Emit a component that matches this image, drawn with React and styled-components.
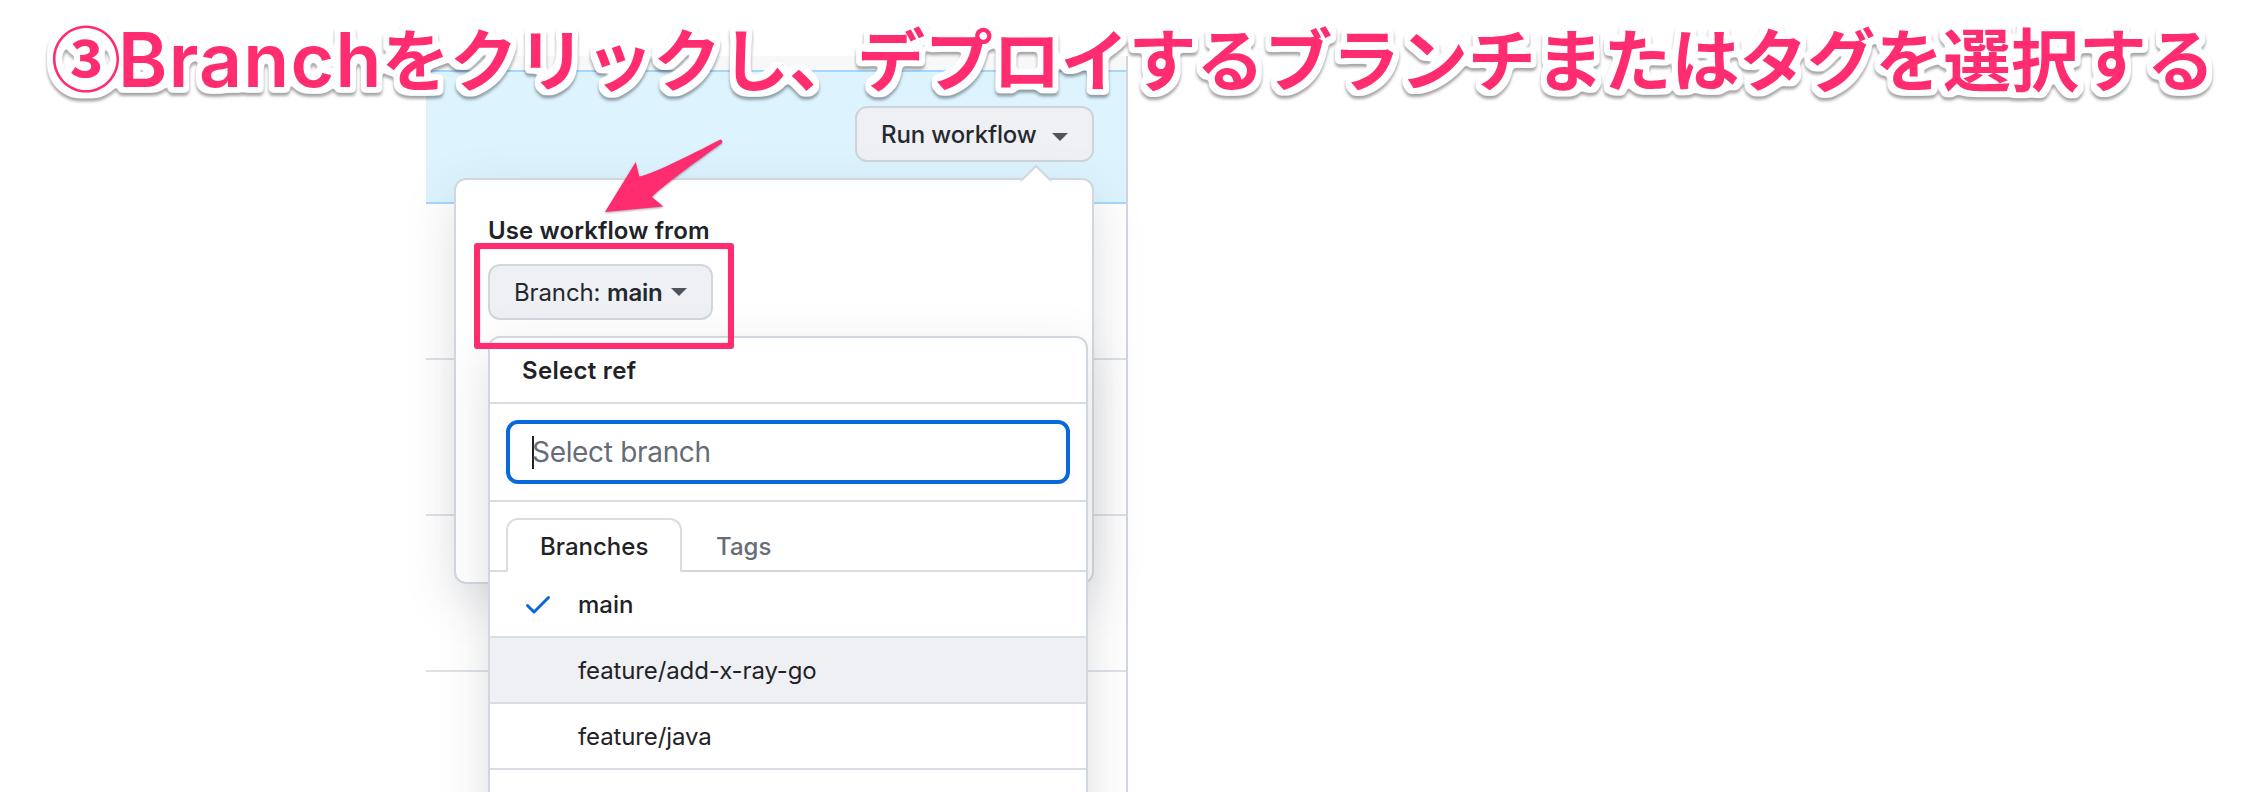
import React from "react";
import styled, { createGlobalStyle } from "styled-components";

const PINK = "#ff2d6f";

const GlobalStyle = createGlobalStyle`
  *, *::before, *::after { box-sizing: border-box; }
  body {
    margin: 0;
    background: #fff;
    color: #1f2328;
    font: 400 24px/36px Inter, "Liberation Sans", sans-serif;
  }
`;

const Page = styled.main`
  position: relative;
  height: 792px;
  padding: 56px 0 0 426px;
  overflow: hidden;
`;

const RunList = styled.section`
  width: 702px;
  border-right: 2px solid #d0d7de;
`;

const ListHeader = styled.header`
  height: 14px;
  background: #f6f8fa;
`;

const DispatchBanner = styled.div`
  display: flex;
  justify-content: flex-end;
  height: 134px;
  padding: 34px 32px 0 0;
  background: #ddf4ff;
  border: solid #a5d6ff;
  border-width: 2px 0;
`;

const RunRow = styled.div`
  height: 156px;
  border-bottom: 2px solid #dce1e6;
`;

const Anchor = styled.div`
  position: relative;
  width: ${(p) => p.$width}px;
  height: 56px;
`;

const Button = styled.button`
  display: flex;
  align-items: center;
  justify-content: space-between;
  width: 100%;
  height: 56px;
  padding: 2px 24px 0;
  border: 2px solid ${(p) => p.$border || "#d0d7de"};
  border-radius: 12px;
  background: #eff0f4;
  color: #24292f;
  font: inherit;
  font-weight: ${(p) => p.$weight || 400};
  letter-spacing: -0.12px;
  white-space: pre;

  b { font-weight: 600; letter-spacing: -0.2px; }
`;

const Caret = styled.span`
  margin-top: ${(p) => p.$drop || 0}px;
  border: solid transparent;
  border-width: 8px 8px 0;
  border-top-color: #4f535a;
`;

const Popover = styled.div`
  position: absolute;
  z-index: 1;
  top: 72px;
  right: 0;
  width: 640px;
  height: 406px;
  padding: 33px 32px;
  background: #fff;
  border: 2px solid #d0d7de;
  border-radius: 12px;
  box-shadow: 0 16px 48px rgba(120, 126, 132, 0.24);
`;

const PopoverArrow = styled.svg`
  position: absolute;
  top: -16px;
  right: 40px;
`;

const Label = styled.div`
  margin-bottom: 15px;
  font-weight: 600;
  letter-spacing: 0.12px;
`;

const RefMenu = styled.div`
  position: absolute;
  top: 72px;
  left: 0;
  width: 600px;
  height: 560px;
  background: #fff;
  border: 2px solid #d0d7de;
  border-radius: 12px;
  box-shadow: 0 16px 48px rgba(120, 126, 132, 0.24);
`;

const MenuTitle = styled.div`
  height: 66px;
  padding: 0 32px;
  border-bottom: 2px solid #d8dee4;
  font-weight: 600;
  line-height: 66px;
  letter-spacing: 0.3px;
`;

const Filter = styled.div`
  height: 98px;
  padding: 16px;
  border-bottom: 2px solid #d8dee4;
`;

const FilterInput = styled.div`
  display: flex;
  align-items: center;
  height: 64px;
  padding-left: 22px;
  border: 4px solid #0969da;
  border-radius: 12px;
  color: #656d76;
  font-size: 28px;
  line-height: 40px;
  letter-spacing: -0.32px;
`;

const TextCursor = styled.i`
  width: 2px;
  height: 33px;
  margin-right: -2px;
  background: #1f2328;
`;

const Tabs = styled.div`
  display: flex;
  height: 70px;
  padding: 16px 16px 0;
  box-shadow: inset 0 -2px #d8dee4;
`;

const Tab = styled.div`
  width: ${(p) => p.$width}px;
  height: 54px;
  padding: 0 32px;
  border: 2px solid ${(p) => (p.$active ? "#d8dee4" : "transparent")};
  border-bottom: ${(p) => (p.$active ? "0" : "2px solid #d0d7de")};
  border-radius: ${(p) => (p.$active ? "12px 12px 0 0" : 0)};
  background: ${(p) => (p.$active ? "#fff" : "transparent")};
  color: ${(p) => (p.$active ? "#1f2328" : "#656d76")};
  font-weight: 500;
  line-height: 54px;
`;

const RefItem = styled.div`
  display: flex;
  align-items: center;
  gap: 24px;
  height: 66px;
  padding: 2px 0 0 32px;
  border-bottom: 2px solid #d8dee4;
  background: ${(p) => (p.$hover ? "#eff0f3" : "#fff")};
  font-weight: ${(p) => (p.$checked ? 500 : 400)};
  letter-spacing: ${(p) => (p.$checked ? 0 : -0.12)}px;
`;

const CheckIcon = styled.svg`
  width: 32px;
  height: 32px;
  margin-bottom: 2px;
  fill: #0969da;
  visibility: ${(p) => (p.$shown ? "visible" : "hidden")};
`;

const Caption = styled.h1`
  position: absolute;
  z-index: 3;
  top: 7px;
  left: 51px;
  margin: 0;
  color: ${PINK};
  font: 700 68px/100px "Noto Sans CJK JP", sans-serif;
  letter-spacing: -0.12px;
  white-space: nowrap;
  filter: url(#outline) drop-shadow(0 3px 1.5px rgba(0, 0, 0, 0.36));
`;

const Numeral = styled.span`
  margin-right: -1px;
  font-size: 70px;
  line-height: 1;
`;

const Latin = styled.span`
  position: relative;
  top: 1px;
  margin: 0 -1px 0 -2px;
  font: 600 75px/1 Inter, sans-serif;
  letter-spacing: 1.3px;
`;

const Defs = styled.svg`
  position: absolute;
`;

const Highlight = styled.div`
  position: absolute;
  z-index: 3;
  top: 243px;
  left: 474px;
  width: 260px;
  height: 106px;
  border: 6px solid ${PINK};
  border-radius: 3px;
  box-shadow: inset 0 0 1px ${PINK};
`;

const Pointer = styled.svg`
  position: absolute;
  z-index: 3;
  top: 130px;
  left: 596px;
  filter: drop-shadow(0 1px 1px rgba(0, 0, 0, 0.35));
`;

const refs = [
  { name: "main", checked: true },
  { name: "feature/add-x-ray-go", hover: true },
  { name: "feature/java" },
  { name: "" },
];

export default function App() {
  return (
    <>
      <GlobalStyle />
      <Page>
        <RunList>
          <ListHeader />
          <DispatchBanner>
            <Anchor $width={239}>
              <Button $weight={500} $border="#cfd4dc">
                Run workflow
                <Caret $drop={4} />
              </Button>
              <Popover>
                <PopoverArrow width="32" height="18" viewBox="0 0 32 18">
                  <path d="M1 17 16 2l15 15" fill="#fff" stroke="#d0d7de" strokeWidth="2" />
                  <path d="M2 16h28v2H2z" fill="#fff" />
                </PopoverArrow>
                <Label>Use workflow from</Label>
                <Anchor $width={225}>
                  <Button>
                    <span>
                      Branch: <b>main</b>
                    </span>
                    <Caret $drop={-2} />
                  </Button>
                  <RefMenu>
                    <MenuTitle>Select ref</MenuTitle>
                    <Filter>
                      <FilterInput>
                        <TextCursor />
                        Select branch
                      </FilterInput>
                    </Filter>
                    <Tabs>
                      <Tab $active $width={176}>Branches</Tab>
                      <Tab $width={120}>Tags</Tab>
                    </Tabs>
                    {refs.map((r) => (
                      <RefItem key={r.name} $checked={r.checked} $hover={r.hover}>
                        <CheckIcon viewBox="0 0 16 16" $shown={r.checked}>
                          <path d="M13.78 4.22a.75.75 0 0 1 0 1.06l-7.25 7.25a.75.75 0 0 1-1.06 0L2.22 9.28a.75.75 0 0 1 1.06-1.06L6 10.94l6.72-6.72a.75.75 0 0 1 1.06 0z" />
                        </CheckIcon>
                        {r.name}
                      </RefItem>
                    ))}
                  </RefMenu>
                </Anchor>
              </Popover>
            </Anchor>
          </DispatchBanner>
          <RunRow />
          <RunRow />
          <RunRow />
          <RunRow />
        </RunList>

        <Defs width="0" height="0">
          <filter id="outline" x="-2%" y="-20%" width="104%" height="140%" colorInterpolationFilters="sRGB">
            <feMorphology in="SourceAlpha" operator="dilate" radius="5" />
            <feGaussianBlur stdDeviation="2" />
            <feComponentTransfer result="edge">
              <feFuncR type="linear" slope="0" intercept="1" />
              <feFuncG type="linear" slope="0" intercept="1" />
              <feFuncB type="linear" slope="0" intercept="1" />
              <feFuncA type="linear" slope="6" intercept="-1.6" />
            </feComponentTransfer>
            <feMerge>
              <feMergeNode in="edge" />
              <feMergeNode in="SourceGraphic" />
            </feMerge>
          </filter>
        </Defs>
        <Caption>
          <Numeral>③</Numeral>
          <Latin>Branch</Latin>
          をクリックし、デプロイするブランチまたはタグを選択する
        </Caption>
        <Pointer width="136" height="90" viewBox="596 130 136 90">
          <path
            d="M605 212 635.7 162 639.3 176.500C646 176 671 165 720.500 139.500A2.400 2.400 0 0 1 722 143C697 161 661 187 652 197L663.300 206.500Z"
            fill={PINK}
          />
        </Pointer>
        <Highlight />
      </Page>
    </>
  );
}
